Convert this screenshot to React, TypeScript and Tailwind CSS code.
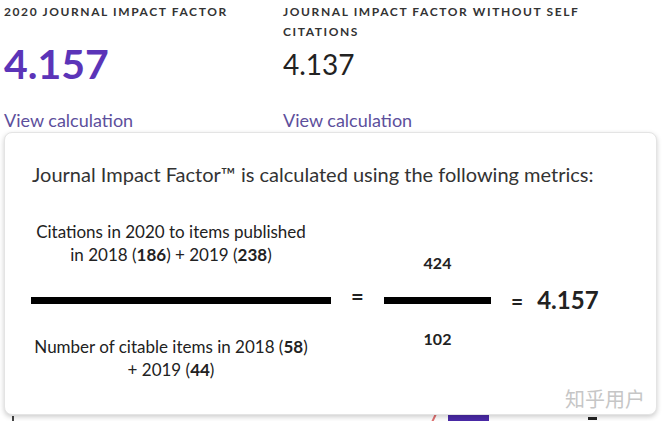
export default function App() {
  return (
    <div className="relative w-[663px] h-[421px] overflow-hidden bg-white text-[#333] font-['Lato','Noto_Sans',sans-serif]">
      {/* Top metrics */}
      <div className="flex h-[132px]">
        <div className="w-[283px] pl-[4px] pt-[2px]">
          <div className="text-[12px] font-bold tracking-[1.6px] leading-[20px] text-[#333]">
            2020 JOURNAL IMPACT FACTOR
          </div>
          <div className="mt-[18px] text-[41px] font-bold leading-[48px] text-[#5b34b8]">4.157</div>
          <div className="mt-[21px] text-[18px] leading-[22px] text-[#5d4f9c]">View calculation</div>
        </div>
        <div className="w-[310px] pt-[2px]">
          <div className="text-[12px] font-bold tracking-[1.6px] leading-[20px] text-[#333]">
            JOURNAL IMPACT FACTOR WITHOUT SELF CITATIONS
          </div>
          <div className="mt-[5px] text-[28px] leading-[34px] text-[#222]">4.137</div>
          <div className="mt-[28px] text-[18px] leading-[22px] text-[#5d4f9c]">View calculation</div>
        </div>
      </div>

      {/* content peeking under the popup */}
      <div className="absolute left-[448px] top-[405px] w-[41px] h-[20px] bg-[#4b2aa8]" />
      <div className="absolute left-[433px] top-[413px] w-[2px] h-[10px] bg-[#e07070] rotate-[25deg]" />
      <div className="absolute left-[588px] top-[417px] w-[9px] h-[3px] bg-[#222]" />
      <div className="absolute left-[12px] top-[416px] w-[2px] h-[5px] bg-[#444]" />

      {/* Popup card */}
      <div className="relative ml-[4px] w-[653px] h-[283px] rounded-[8px] border border-[#e4e4e4] bg-white shadow-[0_2px_5px_rgba(0,0,0,0.2)]">
        <div className="pl-[27px] pt-[27px] text-[20px] leading-[28px] text-[#333]">
          Journal Impact Factor™ is calculated using the following metrics:
        </div>
        <div className="flex items-start mt-[32px] text-[#222]">
          <div className="ml-[26px] w-[300px]">
            <div className="pr-[20px] text-[17px] leading-[23px] text-center">
              Citations in 2020 to items published
              <br />
              in 2018 (<b className="font-bold">186</b>) + 2019 (<b className="font-bold">238</b>)
            </div>
            <div className="mt-[31px] h-[7px] bg-black" />
            <div className="mt-[31px] pr-[20px] text-[17px] leading-[23px] text-center">
              Number of citable items in 2018 (<b className="font-bold">58</b>)
              <br />+ 2019 (<b className="font-bold">44</b>)
            </div>
          </div>
          <div className="w-[53px] mt-[73px] h-[8px] flex items-center justify-center text-[22px] font-bold leading-none">
            =
          </div>
          <div className="w-[107px] flex flex-col">
            <div className="mt-[33px] text-[16px] font-bold leading-[20px] text-center">424</div>
            <div className="mt-[24px] h-[7px] bg-black" />
            <div className="mt-[25px] text-[16px] font-bold leading-[20px] text-center">102</div>
          </div>
          <div className="ml-[20px] mt-[68px] flex items-baseline text-[24px] font-bold leading-[24px] whitespace-nowrap">
            <span className="text-[21px] mr-[14px]">=</span>
            <span>4.157</span>
          </div>
        </div>
        <div className="absolute right-[11px] bottom-[5px] text-[20px] leading-none text-[#c6c6c6] font-['Noto_Sans_CJK_SC',sans-serif]">
          知乎用户
        </div>
      </div>
    </div>
  )
}
